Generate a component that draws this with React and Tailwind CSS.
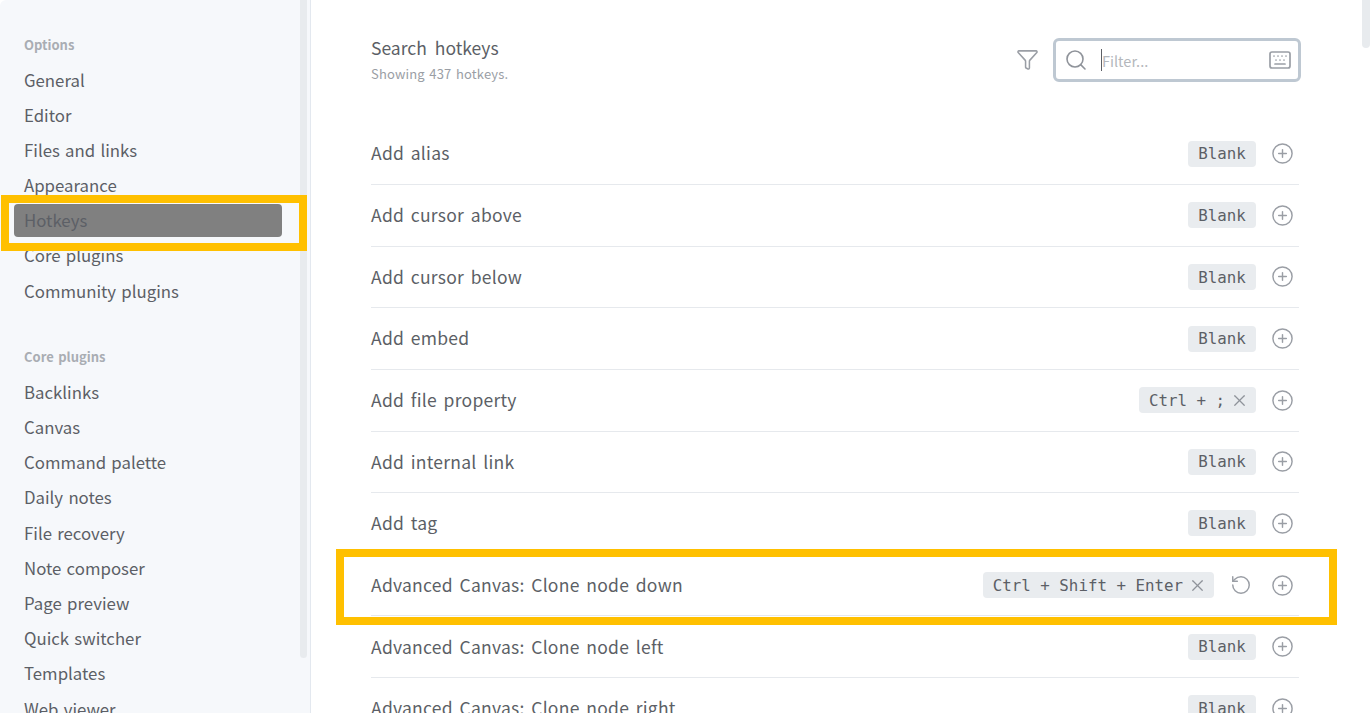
import { Funnel, Search, Keyboard, RotateCcw, CirclePlus, X } from 'lucide-react';

const options = ['General', 'Editor', 'Files and links', 'Appearance', 'Hotkeys', 'Core plugins', 'Community plugins'];
const corePlugins = ['Backlinks', 'Canvas', 'Command palette', 'Daily notes', 'File recovery', 'Note composer', 'Page preview', 'Quick switcher', 'Templates', 'Web viewer'];

const rows = [
  { name: 'Add alias' },
  { name: 'Add cursor above' },
  { name: 'Add cursor below' },
  { name: 'Add embed' },
  { name: 'Add file property', keys: 'Ctrl + ;' },
  { name: 'Add internal link' },
  { name: 'Add tag' },
  { name: 'Advanced Canvas: Clone node down', keys: 'Ctrl + Shift + Enter', reset: true },
  { name: 'Advanced Canvas: Clone node left' },
  { name: 'Advanced Canvas: Clone node right' },
];

function NavItem({ label }) {
  return <div className="h-[35.2px] leading-[35.2px] text-[16.8px] [word-spacing:1.5px] text-[#5c5f66] pl-6">{label}</div>;
}

function Row({ row }) {
  return (
    <div className="h-[61.65px] shrink-0 flex items-center justify-between border-b border-[#e6e9ed]">
      <div className="text-[17.5px] tracking-[0.25px] [word-spacing:2.5px] text-[#5c5f66]">{row.name}</div>
      <div className="flex items-center">
        {row.keys ? (
          <div className="h-[26px] flex items-center pl-[10px] pr-[7px] rounded-[4px] bg-[#e9ecef] font-['DejaVu_Sans_Mono',monospace] text-[15.8px] text-[#5c5f66]">
            <span className="pt-[1px]">{row.keys}</span>
            <X size={19} strokeWidth={1.5} className="ml-[5px] text-[#8f939a]" />
          </div>
        ) : (
          <div className="h-[26px] w-[68px] pt-[1px] flex items-center justify-center rounded-[4px] bg-[#e9ecef] font-['DejaVu_Sans_Mono',monospace] text-[15.8px] text-[#5c5f66]">
            Blank
          </div>
        )}
        {row.reset && <RotateCcw size={22} strokeWidth={1.6} className="ml-[16px] text-[#9a9ea5]" />}
        <CirclePlus size={23} strokeWidth={1.5} className={`${row.reset ? 'ml-[19px]' : 'ml-[15px]'} mr-[5px] text-[#9a9ea5]`} />
      </div>
    </div>
  );
}

export default function App() {
  return (
    <div className="relative h-[713px] w-[1370px] overflow-hidden bg-white flex font-['Noto_Sans_CJK_KR','Noto_Sans',sans-serif]">
      <aside className="relative w-[311px] shrink-0 h-full bg-[#f6f8fb] border-r border-[#e3e8ef] rounded-tl-md pt-[36px]">
        <div className="h-[18px] leading-[18px] pl-6 text-[13px] font-bold text-[#a9adb3]">Options</div>
        <div className="mt-[8.5px]">
          {options.map((o) => <NavItem key={o} label={o} />)}
        </div>
        <div className="mt-[39px] h-[18px] leading-[18px] pl-6 text-[13px] font-bold [word-spacing:1.5px] text-[#a9adb3]">Core plugins</div>
        <div className="mt-[9px]">
          {corePlugins.map((o) => <NavItem key={o} label={o} />)}
        </div>
        <div className="absolute left-[300px] top-0 w-[7px] h-[658px] rounded-b bg-[#e8ebee]" />
      </aside>

      <main className="flex-1 min-w-0 pl-[60px] pr-[71px]">
        <div className="h-[123.3px] flex justify-between">
          <div className="pt-[35px]">
            <div className="text-[17.5px] leading-[25px] [word-spacing:4px] text-[#5c5f66]">Search hotkeys</div>
            <div className="text-[13px] leading-[18px] mt-[5px] tracking-[0.15px] [word-spacing:1.5px] text-[#9a9ea5]">Showing 437 hotkeys.</div>
          </div>
          <div className="flex items-start pt-[38px] -mr-[2px]">
            <Funnel size={23} strokeWidth={1.6} className="mt-[10px] mr-[14px] text-[#9a9ea5]" />
            <div className="w-[248px] h-[44px] flex items-center rounded-[6px] border-[3px] border-[#bec8d2] bg-white">
              <Search size={24} strokeWidth={1.6} className="ml-[8px] text-[#8f939a]" />
              <div className="ml-[13px] w-[1px] h-[22px] bg-[#5c5f66]" />
              <div className="flex-1 text-[14.5px] pt-[1px] text-[#b4b7bc]">Filter...</div>
              <Keyboard size={24} strokeWidth={1.7} className="mr-[6px] text-[#9a9ea5]" />
            </div>
          </div>
        </div>
        <div className="flex flex-col">
          {rows.map((r) => <Row key={r.name} row={r} />)}
        </div>
      </main>

      <div className="absolute right-0 top-0 w-[8px] h-[48px] rounded-b bg-[#e8ebee]" />

      {/* annotation boxes on top of the screenshot */}
      <div className="absolute left-[1px] top-[195px] w-[306px] h-[56px] border-[8px] border-[#ffc000] bg-[#f6f8fb]" />
      <div className="absolute left-[14px] top-[204px] w-[268px] h-[33px] rounded-[4px] bg-[#808080] pl-[10px] leading-[33px] text-[16.8px] text-[#5c5f66]">Hotkeys</div>
      <div className="absolute left-[336px] top-[549px] w-[1001px] h-[76px] border-[8px] border-[#ffc000]" />
    </div>
  );
}
